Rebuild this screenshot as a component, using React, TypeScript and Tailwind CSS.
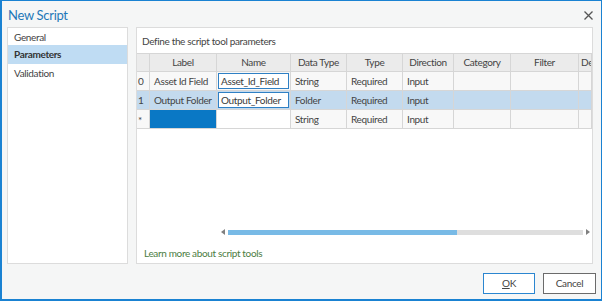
import React from "react";

const cols = [
  { key: "rh", w: 13, label: "" },
  { key: "label", w: 67, label: "Label" },
  { key: "name", w: 74, label: "Name" },
  { key: "dt", w: 56, label: "Data Type" },
  { key: "type", w: 56, label: "Type" },
  { key: "dir", w: 51, label: "Direction" },
  { key: "cat", w: 57, label: "Category" },
  { key: "filter", w: 68, label: "Filter" },
  { key: "de", w: 60, label: "De" },
];

type Row = { rh: string; label: string; name: string; dt: string; type: string; dir: string; sel?: boolean; newRow?: boolean };

const rows: Row[] = [
  { rh: "0", label: "Asset Id Field", name: "Asset_Id_Field", dt: "String", type: "Required", dir: "Input" },
  { rh: "1", label: "Output Folder", name: "Output_Folder", dt: "Folder", type: "Required", dir: "Input", sel: true },
  { rh: "*", label: "", name: "", dt: "String", type: "Required", dir: "Input", newRow: true },
];

export default function App() {
  const font = { fontFamily: 'Lato, "Noto Sans", Arial, sans-serif' };
  return (
    <div
      className="w-[602px] h-[301px] bg-[#f5f6f6] border-l-2 border-r border-t border-b-2 border-[#1a82d2] flex flex-col overflow-hidden text-[#3c3c3c] whitespace-nowrap tracking-[-0.35px]"
      style={font}
    >
      {/* title bar */}
      <div className="h-[26px] flex items-center justify-between pl-[6px] pr-[8px]">
        <span className="text-[13px] text-[#1f78b8] leading-none pt-[2px] tracking-[-0.3px]">New Script</span>
        <svg width="9" height="9" viewBox="0 0 9 9" className="mt-[2px]">
          <path d="M0.5 0.5 L8.5 8.5 M8.5 0.5 L0.5 8.5" stroke="#555" strokeWidth="1.3" />
        </svg>
      </div>

      {/* content */}
      <div className="flex pl-[5px] pr-[8px] gap-[8px] h-[237px]">
        {/* left nav */}
        <div className="w-[121px] bg-white border border-[#dcdcdc] flex flex-col pt-[1px] text-[10px]">
          <div className="h-[16px] pl-[6px] flex items-center text-[#444]">General</div>
          <div className="h-[19px] pl-[6px] flex items-center bg-[#bfdcf3] font-bold text-[#333]">Parameters</div>
          <div className="h-[18px] pl-[6px] flex items-center text-[#444]">Validation</div>
        </div>

        {/* right panel */}
        <div className="flex-1 bg-white border border-[#dcdcdc] flex flex-col overflow-hidden">
          <div className="h-[25px] pl-[5px] flex items-center text-[10px] text-[#444] pt-[2px]">
            Define the script tool parameters
          </div>
          <div className="overflow-hidden w-[455px] border-r border-[#d6d6d6]">
            <div className="w-[560px]">
              {/* header */}
              <div className="flex h-[19px] bg-[#ebebeb] border-t border-b border-[#d6d6d6]">
                {cols.map((c) => (
                  <div
                    key={c.key}
                    style={{ width: c.w }}
                    className="shrink-0 border-r border-[#d6d6d6] flex items-center justify-center text-[10px] text-[#444] last:justify-start last:pl-[2px] overflow-hidden"
                  >
                    {c.label}
                  </div>
                ))}
              </div>
              {rows.map((r, i) => (
                <div
                  key={i}
                  className={`flex h-[19px] border-b border-[#d6d6d6] text-[10px] ${r.sel ? "bg-[#c3daee]" : "bg-[#f8f8f8]"}`}
                >
                  {cols.map((c) => {
                    const v = (r as any)[c.key] as string | undefined;
                    if (c.key === "name" && v) {
                      return (
                        <div key={c.key} style={{ width: c.w }} className="shrink-0 border-r border-[#d6d6d6] p-[1px]">
                          <div className="h-full bg-white border border-[#2f80c4] flex items-center pl-[2px] text-[#3a3a3a] overflow-hidden">{v}</div>
                        </div>
                      );
                    }
                    if (c.key === "label" && r.newRow) {
                      return <div key={c.key} style={{ width: c.w }} className="shrink-0 bg-[#0a78c5] border-r border-[#d6d6d6]" />;
                    }
                    if (c.key === "name" && r.newRow) {
                      return <div key={c.key} style={{ width: c.w }} className="shrink-0 bg-white border-r border-[#d6d6d6]" />;
                    }
                    return (
                      <div
                        key={c.key}
                        style={{ width: c.w }}
                        className={`shrink-0 border-r border-[#d6d6d6] flex items-center text-[#444] overflow-hidden ${c.key === "rh" ? "pl-[1px]" : "pl-[4px]"} ${c.key === "rh" && r.newRow ? "pt-[3px]" : ""}`}
                      >
                        {v ?? ""}
                      </div>
                    );
                  })}
                </div>
              ))}
            </div>
          </div>

          {/* horizontal scrollbar */}
          <div className="mt-[100px] flex items-center h-[6px] ml-[84px] mr-[2px]">
            <svg width="5" height="6" viewBox="0 0 5 6" className="mr-[2px]">
              <path d="M4 0 L0 3 L4 6 Z" fill="#808080" />
            </svg>
            <div className="flex-1 h-[5px] bg-[#dedede] flex">
              <div className="w-[229px] h-full bg-[#78bae6]" />
            </div>
            <svg width="5" height="6" viewBox="0 0 5 6" className="ml-[2px]">
              <path d="M1 0 L5 3 L1 6 Z" fill="#808080" />
            </svg>
          </div>

          <div className="mt-[11px] pl-[7px] text-[10px] text-[#4b7d3f]">Learn more about script tools</div>
        </div>
      </div>

      {/* footer */}
      <div className="flex justify-end gap-[8px] pr-[5px] pt-[9px]">
        <button className="w-[52px] h-[21px] bg-white border-[1.5px] border-[#2b86d0] text-[10px] text-[#444]">
          <span className="underline">O</span>K
        </button>
        <button className="w-[53px] h-[21px] bg-white border-[1.5px] border-[#6b6b6b] text-[10px] text-[#444]">
          Cancel
        </button>
      </div>
    </div>
  );
}
